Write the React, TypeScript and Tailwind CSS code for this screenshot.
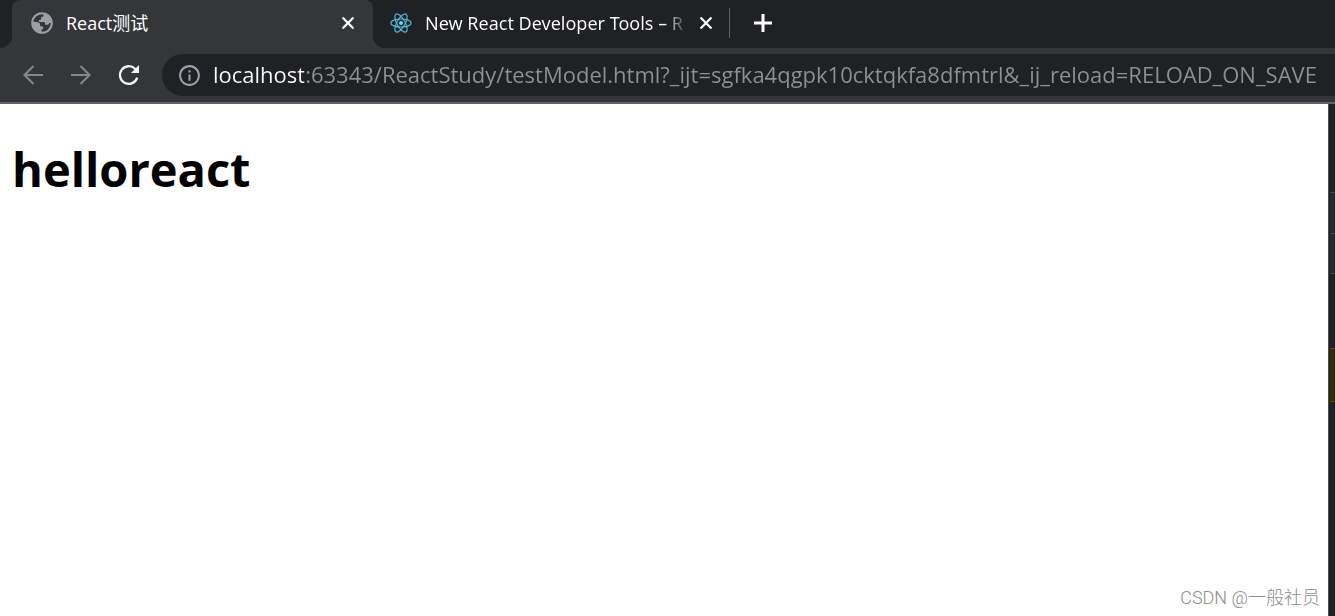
import { useState } from "react";
import { MdInfoOutline } from "react-icons/md";

const PAGE_URL =
  "localhost:63343/ReactStudy/testModel.html?_ijt=sgfka4qgpk10cktqkfa8dfmtrl&_ij_reload=RELOAD_ON_SAVE";

function GlobeIcon() {
  return (
    <svg viewBox="0 0 22 22" className="size-[22px] shrink-0" aria-hidden>
      <circle cx="11" cy="11" r="9.8" fill="none" stroke="#9aa0a6" strokeWidth="2" />
      <path
        fill="#9aa0a6"
        d="M12.5 1.2v2.3c0 1.2-1 1.6-2.4 1.6v1.6c0 1-.8 1.3-2 1.3v2h4.4c1 0 1.6.7 1.6 1.6v1.2h2c1.2 0 1.9-.7 2.2-1.8h2.4A9.8 9.8 0 0 0 12.5 1.2ZM1.5 9.5l5 .8c1.6.3 2.6 1 2.6 2.4v1.5h1.7c1 0 1.4.8 1.4 1.7v1.2h-1.6v3.7A10 10 0 0 1 1.5 9.5Z"
      />
    </svg>
  );
}

function ReactLogo() {
  return (
    <svg
      viewBox="-11 -11 22 22"
      className="size-[22px] shrink-0"
      fill="none"
      stroke="#53b7d3"
      strokeWidth="1.2"
      aria-hidden
    >
      <ellipse rx="10.2" ry="4" />
      <ellipse rx="10.2" ry="4" transform="rotate(60)" />
      <ellipse rx="10.2" ry="4" transform="rotate(120)" />
      <circle r="2" fill="#61dafb" stroke="none" />
    </svg>
  );
}

function CloseIcon() {
  return (
    <svg viewBox="0 0 12 12" className="size-3" stroke="#fff" strokeWidth="2.2" aria-hidden>
      <path d="M0.5 0.5 11.5 11.5M11.5 0.5 0.5 11.5" />
    </svg>
  );
}

function ArrowIcon({ flip = false }: { flip?: boolean }) {
  return (
    <svg
      viewBox="0 0 20 20"
      className={flip ? "size-5 -scale-x-100" : "size-5"}
      fill="none"
      stroke="#85868a"
      strokeWidth="2.1"
      aria-hidden
    >
      <path d="M20 10H2M10.5 1 1.5 10l9 9" />
    </svg>
  );
}

function ReloadIcon() {
  return (
    <svg viewBox="0 0 22 22" className="size-[22px]" fill="none" aria-hidden>
      <path
        d="M19.2 13.6A8.8 8.8 0 1 1 17 4.8L18.4 6.2"
        stroke="#f1f3f4"
        strokeWidth="2.3"
      />
      <path d="M21 1v8h-8Z" fill="#f1f3f4" />
    </svg>
  );
}

function TabStrip() {
  return (
    <div className="flex h-12">
      <div className="w-3 shrink-0 rounded-br-xl bg-[#202124]" />
      <div className="w-[361px] shrink-0 bg-[linear-gradient(#202124_50%,#35363a_50%)]">
        <div className="flex h-full items-center rounded-t-lg bg-[#35363a] px-[19px] pb-0.5">
          <GlobeIcon />
          <span className="ml-[13px] flex-1 text-lg text-white">React测试</span>
          <button type="button" aria-label="Close tab" className="size-3">
            <CloseIcon />
          </button>
        </div>
      </div>
      <div className="flex min-w-0 flex-1 items-center rounded-bl-xl bg-[#202124] pb-0.5 pl-[17px]">
        <ReactLogo />
        <span className="ml-[13px] w-[263px] shrink-0 bg-[linear-gradient(to_right,#fff_238px,transparent_264px)] bg-clip-text font-['Noto_Sans',sans-serif] text-lg whitespace-nowrap text-transparent">
          New React Developer Tools – R
        </span>
        <button type="button" aria-label="Close tab" className="ml-3 size-3 shrink-0">
          <CloseIcon />
        </button>
        <div className="ml-[17px] h-[30px] w-px shrink-0 bg-[#5f6165]" />
        <button type="button" aria-label="New tab" className="ml-6 size-[18px] shrink-0">
          <svg viewBox="0 0 18 18" className="size-[18px]" stroke="#fff" strokeWidth="3">
            <path d="M0 9h18M9 0v18" />
          </svg>
        </button>
      </div>
    </div>
  );
}

function Toolbar() {
  const [url, setUrl] = useState(PAGE_URL);

  return (
    <div className="flex items-center border-b-2 border-[#626165] py-1.5 pl-[23px]">
      <button type="button" aria-label="Back" className="size-5 shrink-0">
        <ArrowIcon />
      </button>
      <button type="button" aria-label="Forward" className="ml-7 size-5 shrink-0">
        <ArrowIcon flip />
      </button>
      <button type="button" aria-label="Reload" className="ml-[27px] size-[22px] shrink-0">
        <ReloadIcon />
      </button>
      <div className="ml-[22px] flex h-[42px] min-w-0 flex-1 items-center rounded-l-full bg-[#202124] pl-[15px]">
        <MdInfoOutline className="size-[25px] shrink-0 text-[#9aa0a6]" />
        <input
          type="text"
          aria-label="Address"
          value={url}
          spellCheck={false}
          onChange={(e) => setUrl(e.target.value)}
          className="ml-[11px] min-w-0 flex-1 bg-[linear-gradient(to_right,#fff_91px,#8f9093_91px)] bg-clip-text pb-0.5 text-[22px] text-transparent caret-white outline-none"
        />
      </div>
    </div>
  );
}

// sliver of the editor window behind the browser
function EditorEdge() {
  return (
    <div className="flex w-[7px] shrink-0 flex-col border-l border-[#494d52] bg-[#1f2125] pl-px" aria-hidden>
      <div className="mt-[88px] h-[41px] border-t border-[#45474d] bg-[#27282e]" />
      <div className="h-[41px] border-y border-[#45474d] bg-[#27282e]" />
      <div className="mt-[74px] h-[54px] border-y border-[#5e4a0c] bg-[#312a05]" />
    </div>
  );
}

export default function App() {
  return (
    <div className="flex min-h-screen flex-col overflow-hidden bg-white font-['Open_Sans','Noto_Sans_CJK_SC',sans-serif]">
      <header className="bg-[#35363a]">
        <TabStrip />
        <Toolbar />
      </header>
      <div className="flex flex-1">
        <main className="flex min-w-0 flex-1 flex-col justify-between">
          <h1 className="px-3 pt-8 text-[47px] leading-[66px] font-bold text-black">helloreact</h1>
          <p className="self-end pr-2 pb-1 font-['Roboto','Noto_Sans_CJK_SC',sans-serif] text-lg font-light text-[#8c8c8c]">
            CSDN @一般社员
          </p>
        </main>
        <EditorEdge />
      </div>
    </div>
  );
}
